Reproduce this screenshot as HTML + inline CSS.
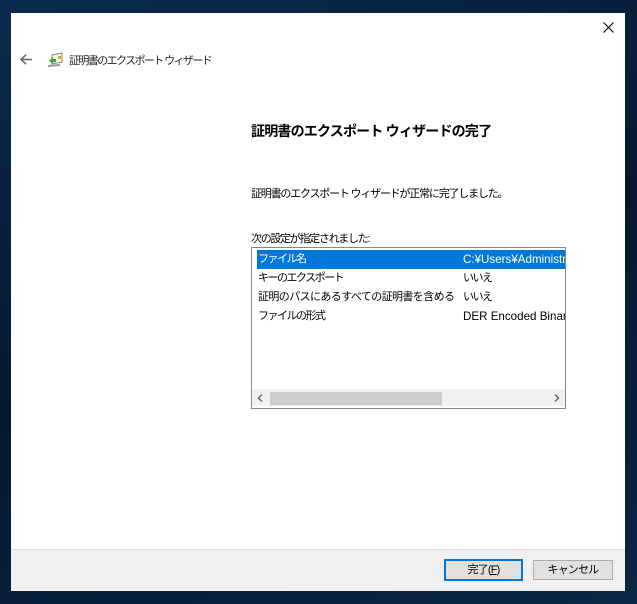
<!DOCTYPE html>
<html><head><meta charset="utf-8"><style>
body{margin:0;width:637px;height:604px;background:linear-gradient(160deg,#0b2a4e 0%,#06182f 50%,#0a2646 100%);position:relative;overflow:hidden;font-family:"Liberation Sans","Noto Sans CJK JP",sans-serif;font-size:11px;color:#000}
.win{position:absolute;left:11px;top:13px;width:614px;height:577px;background:#fff}
.foot{position:absolute;left:0;top:536px;width:614px;height:41px;background:#f0f0f0;border-top:1px solid #dfdfdf}
.abs{position:absolute;white-space:nowrap}
.jp{font-size:11px;letter-spacing:-1.5px}
.lat{font-size:11.6px;letter-spacing:0}
.btn{position:absolute;top:10px;height:18px;width:78px;background:#e1e1e1;border:1px solid #adadad;text-align:center;line-height:18px;font-size:11px;letter-spacing:-0.8px}
.list{position:absolute;left:240px;top:234px;width:313px;height:160px;border:1px solid #828790;background:#fff;overflow:hidden}
.row{position:absolute;left:0;height:19px;line-height:19px;width:313px}
</style></head><body>
<div class="win">
<svg class="abs" style="left:592px;top:9px" width="11" height="11" viewBox="0 0 11 11"><path d="M0.5 0.5L10.5 10.5M10.5 0.5L0.5 10.5" stroke="#000" stroke-width="1.1"/></svg>
<svg class="abs" style="left:9px;top:41px" width="13" height="11" viewBox="0 0 13 11"><path d="M1 5.5H12M6 0.8L1 5.5L6 10.2" stroke="#666" stroke-width="1.5" fill="none"/></svg>
<svg class="abs" style="left:36px;top:38px" width="17" height="17" viewBox="0 0 17 17"><path d="M5 4 L15 2 L15 11 L5 13 Z" fill="#f4f4f0" stroke="#888"/><rect x="11" y="5" width="3" height="3" fill="#e8a020"/><path d="M2 10 L6 6 L6 8 L9 8 L9 11 L6 11 L6 13 Z" fill="#3aa830"/><path d="M1 14 L13 13 L13 15 L1 16z" fill="#999"/></svg>
<div class="abs jp" style="left:58px;top:39px;color:#222;letter-spacing:-1.6px">証明書のエクスポート ウィザード</div>
<div class="abs" style="left:240px;top:108px;font-size:14px;font-weight:bold;letter-spacing:-0.8px">証明書のエクスポート ウィザードの完了</div>
<div class="abs jp" style="left:240px;top:172px;letter-spacing:-1.2px">証明書のエクスポート ウィザードが正常に完了しました。</div>
<div class="abs jp" style="left:240px;top:217px;letter-spacing:-1.3px">次の設定が指定されました:</div>
<div class="list">
<div class="row" style="top:2px;left:5px;width:308px;background:#0078d7;color:#fff"><span class="abs jp" style="left:1px">ファイル名</span><span class="abs lat" style="left:206px">C:¥Users¥Administr</span></div>
<div class="row" style="top:21px"><span class="abs jp" style="left:6px">キーのエクスポート</span><span class="abs jp" style="left:211px">いいえ</span></div>
<div class="row" style="top:40px"><span class="abs jp" style="left:6px;letter-spacing:-0.6px">証明のパスにあるすべての証明書を含める</span><span class="abs jp" style="left:211px">いいえ</span></div>
<div class="row" style="top:59px"><span class="abs jp" style="left:6px">ファイルの形式</span><span class="abs lat" style="left:211px">DER Encoded Binar</span></div>
<div class="abs" style="left:0;top:141px;width:313px;height:17px;background:#f0f0f0"></div>
<div class="abs" style="left:18px;top:144px;width:172px;height:13px;background:#cdcdcd"></div>
<svg class="abs" style="left:5px;top:146px" width="6" height="8" viewBox="0 0 6 8"><path d="M5 0.5L1.5 4L5 7.5" stroke="#606060" stroke-width="1.4" fill="none"/></svg>
<svg class="abs" style="left:302px;top:146px" width="6" height="8" viewBox="0 0 6 8"><path d="M1 0.5L4.5 4L1 7.5" stroke="#606060" stroke-width="1.4" fill="none"/></svg>
</div>
<div class="foot">
<div class="btn" style="left:433px;border:2px solid #0078d7;top:9px;width:75px">完了(<u>F</u>)</div>
<div class="btn" style="left:522px">キャンセル</div>
</div>
</div>
</body></html>
